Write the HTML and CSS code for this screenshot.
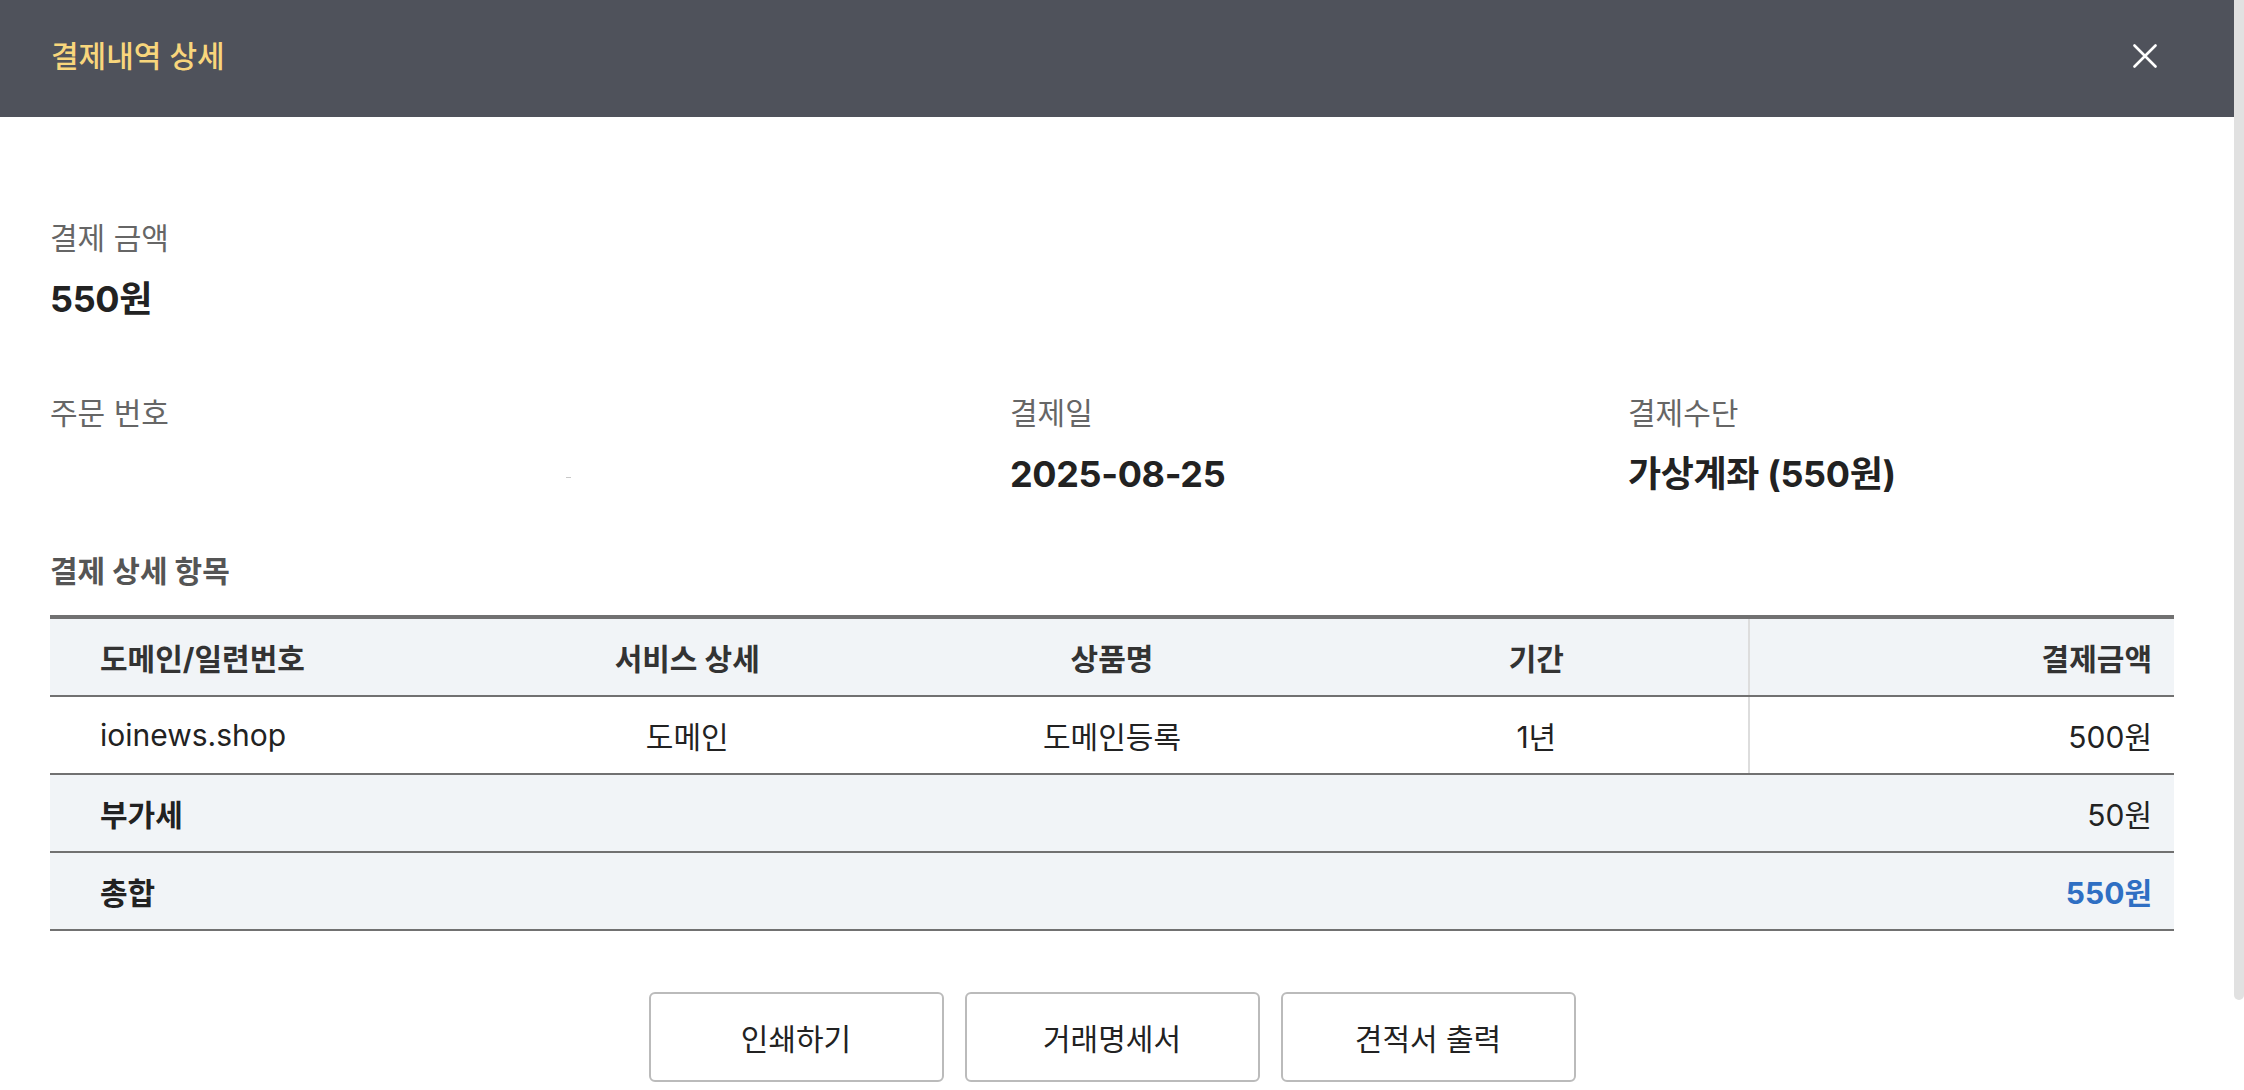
FILE: index.html
```html
<!DOCTYPE html>
<html lang="ko">
<head>
<meta charset="utf-8">
<title>결제내역 상세</title>
<link rel="stylesheet" href="styles.css">
</head>
<body>
<div class="page">
  <div class="modal">
    <header class="modal-header">
      <h1 class="modal-title">결제내역 상세</h1>
      <button class="close-btn" type="button" aria-label="닫기">
        <svg width="24" height="24" viewBox="0 0 24 24"><path d="M1.5 1.5 L22.5 22.5 M22.5 1.5 L1.5 22.5" stroke="#ffffff" stroke-width="2.6" stroke-linecap="round" fill="none"/></svg>
      </button>
    </header>
    <div class="modal-body">
      <section class="summary">
        <div class="field">
          <div class="label">결제 금액</div>
          <div class="value">550원</div>
        </div>
      </section>
      <section class="info-grid">
        <div class="field">
          <div class="label">주문 번호</div>
          <div class="value"><span class="masked"></span></div>
        </div>
        <div class="field">
          <div class="label">결제일</div>
          <div class="value">2025-08-25</div>
        </div>
        <div class="field">
          <div class="label">결제수단</div>
          <div class="value">가상계좌 (550원)</div>
        </div>
      </section>
      <h2 class="section-title">결제 상세 항목</h2>
      <table class="detail-table">
        <thead>
          <tr>
            <th class="col-left">도메인/일련번호</th>
            <th>서비스 상세</th>
            <th>상품명</th>
            <th>기간</th>
            <th class="col-amount col-divider">결제금액</th>
          </tr>
        </thead>
        <tbody>
          <tr class="item-row">
            <td class="col-left">ioinews.shop</td>
            <td>도메인</td>
            <td>도메인등록</td>
            <td>1년</td>
            <td class="col-amount col-divider">500원</td>
          </tr>
          <tr class="sum-row">
            <td class="col-left strong" colspan="4">부가세</td>
            <td class="col-amount">50원</td>
          </tr>
          <tr class="sum-row">
            <td class="col-left strong" colspan="4">총합</td>
            <td class="col-amount total">550원</td>
          </tr>
        </tbody>
      </table>
      <div class="actions">
        <button class="action-btn" type="button">인쇄하기</button>
        <button class="action-btn" type="button">거래명세서</button>
        <button class="action-btn" type="button">견적서 출력</button>
      </div>
    </div>
  </div>
  <div class="scrollbar"><div class="scroll-thumb"></div></div>
</div>
</body>
</html>
```

FILE: styles.css
```css
* {
  box-sizing: border-box;
}

html, body {
  margin: 0;
  padding: 0;
  background: #ffffff;
  overflow: hidden;
}

body {
  font-family: Inter, "Noto Sans CJK KR", sans-serif;
  color: #222222;
}

.page {
  display: flex;
  width: 2244px;
  height: 1090px;
}

.modal {
  flex: 1;
  display: flex;
  flex-direction: column;
  background: #ffffff;
}

.scrollbar {
  width: 10px;
  flex: none;
}

.scroll-thumb {
  height: 1000px;
  background: #e1e1e1;
  border-radius: 0 0 5px 5px;
}

.modal-header {
  height: 117px;
  flex: none;
  background: #4f525b;
  display: flex;
  align-items: center;
  justify-content: space-between;
  padding: 0 77px 6px 51px;
}

.modal-title {
  margin: 0;
  font-size: 30px;
  font-weight: 500;
  line-height: 40px;
  color: #f8d67c;
}

.close-btn {
  background: none;
  border: 0;
  padding: 0;
  width: 24px;
  height: 24px;
  display: flex;
  cursor: pointer;
}

.modal-body {
  padding: 101px 60px 0 50px;
}

.field {
  display: flex;
  flex-direction: column;
  gap: 16px;
}

.label {
  font-size: 30px;
  line-height: 40px;
  color: #666666;
}

.value {
  font-size: 36px;
  line-height: 50px;
  height: 50px;
  font-weight: 700;
  color: #222222;
  letter-spacing: -0.01em;
}

.masked {
  display: inline-block;
  width: 5px;
  height: 1px;
  margin-left: 516px;
  vertical-align: middle;
  background: #c8c8c8;
}

.info-grid {
  display: grid;
  grid-template-columns: 960px 618px 1fr;
  margin-top: 69px;
}

.section-title {
  margin: 52px 0 0;
  font-size: 30px;
  line-height: 40px;
  font-weight: 700;
  color: #555555;
}

.detail-table {
  width: 100%;
  margin-top: 24px;
  border-collapse: collapse;
  table-layout: fixed;
  border-top: 4px solid #717171;
}

.detail-table th,
.detail-table td {
  width: 20%;
  height: 78px;
  padding: 0 22px;
  font-size: 30px;
  text-align: center;
  border-bottom: 2px solid #717171;
}

.detail-table th {
  height: 79px;
  font-weight: 700;
  color: #333333;
  background: #f1f4f7;
}

.detail-table td {
  font-weight: 400;
  color: #222222;
}

.detail-table .col-left {
  text-align: left;
  padding-left: 50px;
}

.detail-table .col-amount {
  text-align: right;
  padding-right: 22px;
}

.detail-table .col-divider {
  border-left: 2px solid #dddddd;
}

.sum-row td {
  background: #f1f4f7;
}

.detail-table .strong {
  font-weight: 700;
  color: #222222;
}

.detail-table .total {
  font-weight: 700;
  color: #2f6fc3;
}

.actions {
  display: flex;
  justify-content: center;
  gap: 21px;
  margin-top: 61px;
}

.action-btn {
  width: 295px;
  height: 90px;
  background: #ffffff;
  border: 2px solid #bbbbbb;
  border-radius: 6px;
  font-family: Inter, "Noto Sans CJK KR", sans-serif;
  font-size: 30px;
  color: #222222;
  cursor: pointer;
}
```
